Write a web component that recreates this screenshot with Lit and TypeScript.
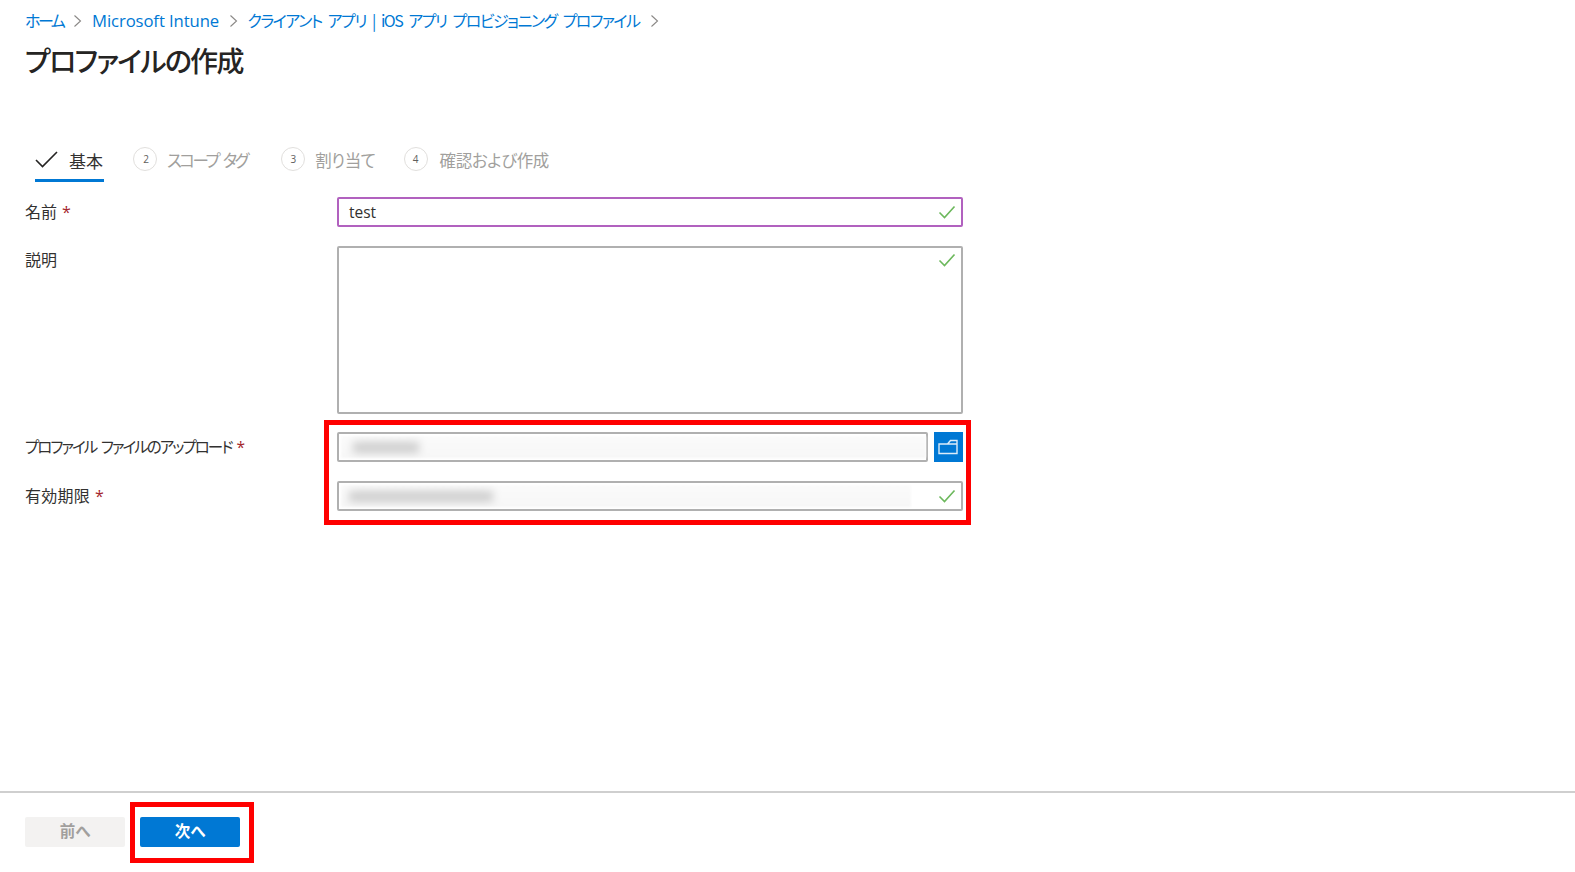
import { LitElement, html, css, svg } from "lit";
import { customElement } from "lit/decorators.js";

const check = svg`<svg class="ok" width="18" height="14" viewBox="0 0 18 14"><path d="M1.5 7.5 L6.5 12.5 L16.5 1.5" fill="none" stroke="#6cb85c" stroke-width="1.6"/></svg>`;
const chev = html`<svg class="chev" width="9" height="14" viewBox="0 0 9 14"><path d="M1.5 1.5 L7.5 7 L1.5 12.5" fill="none" stroke="#8a8886" stroke-width="1.1"/></svg>`;

@customElement("app-root")
export class AppRoot extends LitElement {
  static styles = css`
    :host {
      display: flex;
      flex-direction: column;
      height: 872px;
      position: relative;
      overflow: hidden;
      background: #fff;
      color: #323130;
      font-family: "Noto Sans CJK JP", "Open Sans", sans-serif;
      font-feature-settings: "palt";
      font-size: 16px;
    }
    main { flex: 1; padding: 0 25px; min-height: 0; }
    .crumbs {
      display: flex;
      align-items: center;
      height: 41px;
      color: #0078d4;
      font-size: 16px;
      line-height: 41px;
      white-space: nowrap;
    }
    .crumbs .chev { margin: 0 10px 0 10px; flex: none; }
    .crumbs .c1 { width: 38px; letter-spacing: -2.5px; }
    .crumbs .c2 { width: 126.5px; font-family: "Open Sans", sans-serif; font-size: 16.7px; letter-spacing: -0.1px; }
    .crumbs .c3 { width: 392px; letter-spacing: -1.5px; word-spacing: 4px; }
    h1 {
      margin: 0;
      height: 39px;
      line-height: 39px;
      font-size: 28px;
      font-weight: 500;
      letter-spacing: -1.7px;
      color: #252423;
    }
    .tabs {
      display: flex;
      height: 50px;
      margin-top: 52px;
      margin-left: 10px;
      align-items: stretch;
      color: #a19f9d;
      font-size: 16.5px;
      white-space: nowrap;
    }
    .tab { display: flex; align-items: center; box-sizing: border-box; }
    .tab.active { color: #323130; width: 69px; border-bottom: 3px solid #0078d4; gap: 11px; padding-top: 9px; font-size: 17px; }
    .tab.active svg { flex: none; margin-top: -2px; }
    .num {
      box-sizing: border-box;
      width: 24px;
      height: 24px;
      border: 1.5px solid #e1dfdd;
      border-radius: 50%;
      display: flex;
      align-items: center;
      justify-content: center;
      font-family: "Open Sans", sans-serif;
      font-size: 10px;
      color: #605e5c;
      margin-right: 10px;
      margin-top: -2px;
    }
    .tab.off { margin-left: 29px; padding-top: 5px; letter-spacing: -0.4px; }
    .tab.off.t2 { letter-spacing: -2.4px; word-spacing: 3px; }
    .tab.off.t3 { margin-left: 34px; }
    .tab.off.t3 .num { margin-right: 10px; }
    .tab.off.t4 { margin-left: 28px; }
    .tab.off.t4 .num { margin-right: 12px; }
    .form {
      display: grid;
      grid-template-columns: 312px 625.5px;
      margin-top: 15px;
    }
    .label { font-size: 16px; letter-spacing: 0.25px; white-space: nowrap; line-height: 28px; }
    .label.n, .label.d { letter-spacing: 0; }
    .label.long { font-size: 15.5px; letter-spacing: -1.95px; word-spacing: 3px; line-height: 28px; }
    .label.d { line-height: 26px; }
    .req { color: #a4262c; font-family: "Open Sans", sans-serif; margin-left: 5px; letter-spacing: 0; }
    .box {
      box-sizing: border-box;
      border: 2px solid #b0b0b0;
      border-radius: 2px;
      display: flex;
      align-items: center;
      justify-content: space-between;
      padding: 0 5px 0 10px;
      background: #fff;
      min-width: 0;
    }
    .name { height: 30px; margin-bottom: 19px; border-color: #b161bf; font-family: "Open Sans", sans-serif; font-size: 15.5px; }
    .label.n { margin-bottom: 19px; }
    .area { height: 168px; margin-bottom: 18px; align-items: flex-start; padding-top: 5px; justify-content: flex-end; }
    .up { display: flex; gap: 6px; height: 30px; margin-bottom: 19px; }
    .up .box { flex: 1; height: 30px; padding: 0; }
    .browse { width: 29px; height: 30px; background: #0078d4; display: flex; align-items: center; justify-content: center; flex: none; }
    .exp { height: 30px; padding: 0; }
    .exp .ok { margin-right: 5px; }
    .blurfield { position: relative; flex: 1; align-self: stretch; margin: 2px 0 2px 2px; background: linear-gradient(#fbfbfb, #f7f7f7); filter: blur(1px); overflow: hidden; }
    .blurfield .s { position: absolute; top: 50%; height: 11px; margin-top: -5px; background: #cdcdcd; filter: blur(4px); }
    .fade { margin-right: 27px; }
    footer {
      flex: none;
      box-sizing: border-box;
      height: 81px;
      border-top: 2px solid #cfcfcf;
      padding: 24px 25px 0;
      display: flex;
      gap: 15px;
      align-items: flex-start;
    }
    button {
      width: 100px;
      height: 30px;
      border: none;
      border-radius: 2px;
      font: inherit;
      font-size: 15.5px;
      font-weight: 700;
      padding: 0 0 4px;
      line-height: 26px;
    }
    .prev { background: #f3f2f1; color: #a19f9d; }
    .next { background: #0078d4; color: #fff; }
    .mark { position: absolute; box-sizing: border-box; border: 5px solid #ff0000; pointer-events: none; }
    .m1 { left: 323.5px; top: 420px; width: 647.5px; height: 104.5px; }
    .m2 { left: 130px; top: 802px; width: 124px; height: 61px; }
  `;

  render() {
    return html`
      <main>
        <nav class="crumbs">
          <span class="c1">ホーム</span>${chev}
          <span class="c2">Microsoft Intune</span>${chev}
          <span class="c3">クライアント アプリ | iOS アプリ プロビジョニング プロファイル</span>${chev}
        </nav>
        <h1>プロファイルの作成</h1>
        <div class="tabs">
          <div class="tab active">
            <svg width="23" height="17" viewBox="0 0 23 17"><path d="M1 9 L7.5 15.5 L22 1" fill="none" stroke="#252423" stroke-width="1.6"/></svg>
            <span>基本</span>
          </div>
          <div class="tab off t2"><span class="num">2</span><span>スコープ タグ</span></div>
          <div class="tab off t3"><span class="num">3</span><span>割り当て</span></div>
          <div class="tab off t4"><span class="num">4</span><span>確認および作成</span></div>
        </div>
        <div class="form">
          <div class="label n">名前<span class="req">*</span></div>
          <div class="box name"><span>test</span>${check}</div>

          <div class="label d">説明</div>
          <div class="box area">${check}</div>

          <div class="label long">プロファイル ファイルのアップロード<span class="req">*</span></div>
          <div class="up">
            <div class="box">
              <div class="blurfield"><span class="s" style="left:12px;width:66px"></span></div>
            </div>
            <div class="browse">
              <svg width="20" height="16" viewBox="0 0 20 16"><path d="M1 14.5 V5 H9.5 L12.5 1.5 H19 V14.5 Z M9.5 5 H19" fill="none" stroke="#dcecf9" stroke-width="1.4"/></svg>
            </div>
          </div>

          <div class="label">有効期限<span class="req">*</span></div>
          <div class="box exp">
            <div class="blurfield fade"><span class="s" style="left:8px;width:144px"></span></div>
            ${check}
          </div>
        </div>
      </main>
      <footer>
        <button class="prev" disabled>前へ</button>
        <button class="next">次へ</button>
      </footer>
      <div class="mark m1"></div>
      <div class="mark m2"></div>
    `;
  }
}
